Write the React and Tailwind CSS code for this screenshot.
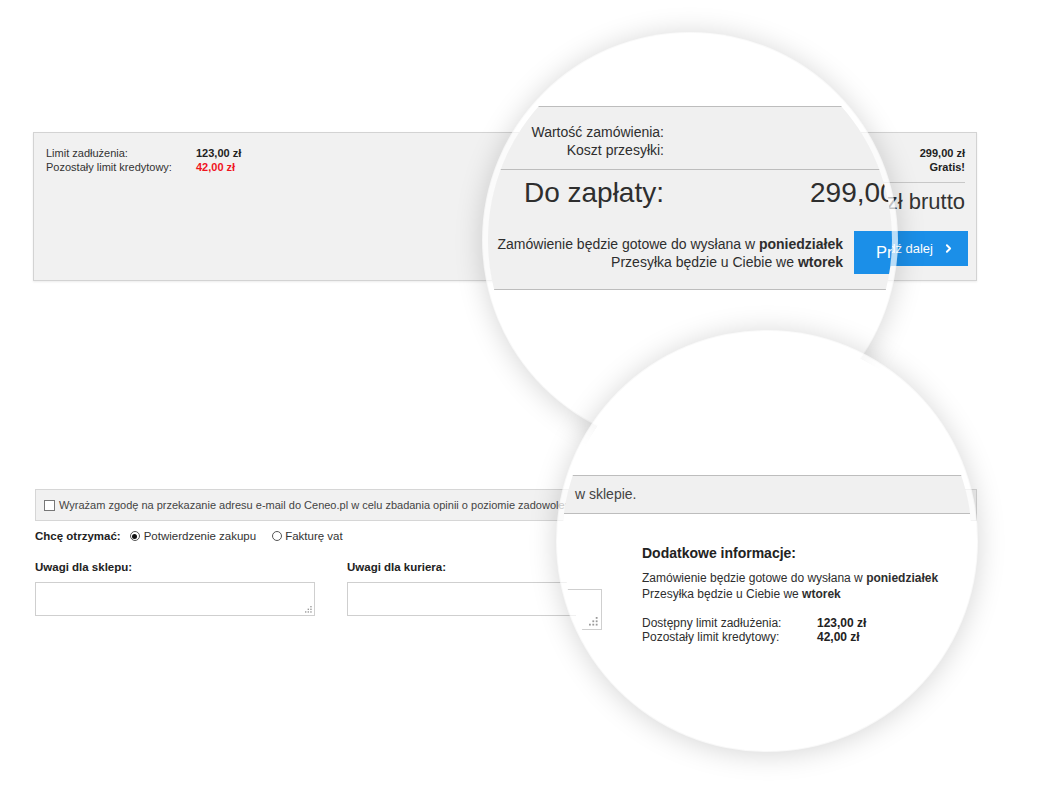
import { ChevronRight } from "lucide-react";

function Grip({ size = 8, color = "#9a9a9a" }) {
  const dots = [
    [6, 0],
    [3, 3],
    [6, 3],
    [0, 6],
    [3, 6],
    [6, 6],
  ];
  return (
    <svg width={size} height={size} viewBox="0 0 8 8" className="block">
      {dots.map(([x, y]) => (
        <rect key={`${x}-${y}`} x={x} y={y} width={1.6} height={1.6} fill={color} />
      ))}
    </svg>
  );
}

function Radio({ checked }) {
  return (
    <span className="flex h-[10px] w-[10px] items-center justify-center rounded-full border border-[#555] bg-white">
      {checked && <span className="h-[5px] w-[5px] rounded-full bg-[#111]" />}
    </span>
  );
}

function NoteBox({ label }) {
  return (
    <div className="w-[280px]">
      <div className="text-[11.5px] font-bold leading-[14px] text-[#222]">{label}</div>
      <div className="relative mt-[8px] h-[34px] border border-[#cfcfcf] bg-white">
        <div className="absolute bottom-[2px] right-[2px]">
          <Grip size={7} />
        </div>
      </div>
    </div>
  );
}

export default function App() {
  return (
    <div className="relative h-[787px] w-[1040px] overflow-hidden bg-white font-['Liberation_Sans',Arial,sans-serif] text-[#333]">
      <div className="pl-[33px] pt-[132px]">
        {/* koszyk - podsumowanie */}
        <div className="flex h-[149px] w-[944px] justify-between border border-[#d3d3d3] bg-[#f1f1f1] shadow-[0_1px_2px_rgba(0,0,0,0.08)]">
          <div className="pl-[12px] pt-[13px] text-[11px] leading-[14px]">
            <div className="flex">
              <span className="w-[150px]">Limit zadłużenia:</span>
              <span className="font-bold text-[#222]">123,00 zł</span>
            </div>
            <div className="flex">
              <span className="w-[150px]">Pozostały limit kredytowy:</span>
              <span className="font-bold text-[#f0141e]">42,00 zł</span>
            </div>
          </div>

          <div className="w-[300px] pr-[11px] pt-[13px]">
            <div className="flex justify-between text-[11px] leading-[14px]">
              <span>Wartość zamówienia:</span>
              <span className="font-bold text-[#222]">299,00 zł</span>
            </div>
            <div className="flex justify-between text-[11px] leading-[14px]">
              <span>Koszt przesyłki:</span>
              <span className="font-bold text-[#222]">Gratis!</span>
            </div>
            <div className="ml-[40px] mt-[8px] border-t border-[#c8c8c8]" />
            <div className="mt-[6px] flex justify-between text-[22px] leading-[26px]">
              <span>Do zapłaty:</span>
              <span>299,00 zł brutto</span>
            </div>
            <div className="-mr-[3px] mt-[16px] flex items-center justify-end gap-[8px]">
              <div className="whitespace-nowrap text-right text-[11px] leading-[14px]">
                <div>
                  Zamówienie będzie gotowe do wysłana w <b>poniedziałek</b>
                </div>
                <div>
                  Przesyłka będzie u Ciebie we <b>wtorek</b>
                </div>
              </div>
              <button className="flex h-[35px] shrink-0 items-center gap-[9px] whitespace-nowrap bg-[#1b8fe8] px-[13px] text-[13px] text-white">
                Przejdź dalej
                <ChevronRight size={13} strokeWidth={3.5} />
              </button>
            </div>
          </div>
        </div>

        {/* zgoda */}
        <div className="ml-[2px] mt-[208px] flex h-[32px] w-[942px] items-center gap-[4px] border border-[#d6d6d6] bg-[#f1f1f1] pl-[8px] text-[11px] text-[#444]">
          <span className="h-[11px] w-[11px] border border-[#777] bg-white" />
          <span className="whitespace-nowrap">
            Wyrażam zgodę na przekazanie adresu e-mail do Ceneo.pl w celu zbadania opinii o poziomie zadowolenia z zakupu w sklepie.
          </span>
        </div>

        <div className="ml-[2px] mt-[8px] flex h-[14px] items-center text-[11.5px] leading-[14px]">
          <span className="font-bold text-[#222]">Chcę otrzymać:</span>
          <span className="ml-[9px] flex items-center gap-[4px]">
            <Radio checked />
            <span>Potwierdzenie zakupu</span>
          </span>
          <span className="ml-[16px] flex items-center gap-[3px]">
            <Radio />
            <span>Fakturę vat</span>
          </span>
        </div>

        <div className="ml-[2px] mt-[17px] flex gap-[32px]">
          <NoteBox label="Uwagi dla sklepu:" />
          <NoteBox label="Uwagi dla kuriera:" />
        </div>
      </div>

      {/* lupa 1 */}
      <div className="absolute left-[482px] top-[32px] h-[416px] w-[416px] overflow-hidden rounded-full border-[6px] border-white/70 bg-white bg-clip-padding shadow-[0_2px_28px_rgba(0,0,0,0.17)]">
        <div className="mt-[68px] w-[700px] border-y border-[#bdbdbd] bg-[#f0f0f0] pb-[15px] pt-[16px] text-[#2e2e2e]">
          <div className="w-[176px] text-right text-[14px] leading-[18px]">
            <div>Wartość zamówienia:</div>
            <div>Koszt przesyłki:</div>
          </div>
          <div className="mt-[10px] border-t border-[#bdbdbd]" />
          <div className="mt-[6px] flex whitespace-nowrap text-[28px] leading-[34px]">
            <span className="w-[176px] text-right">Do zapłaty:</span>
            <span className="ml-[146px]">299,00 zł brutto</span>
          </div>
          <div className="mt-[21px] flex items-center">
            <div className="w-[355px] whitespace-nowrap text-right text-[14px] leading-[18px]">
              <div>
                Zamówienie będzie gotowe do wysłana w <b>poniedziałek</b>
              </div>
              <div>
                Przesyłka będzie u Ciebie we <b>wtorek</b>
              </div>
            </div>
            <button className="ml-[11px] flex h-[43px] w-[146px] shrink-0 items-center whitespace-nowrap bg-[#1b8fe8] pl-[22px] text-[16.5px] text-white">
              Przejdź dalej
            </button>
          </div>
        </div>
      </div>

      {/* lupa 2 */}
      <div className="absolute left-[556px] top-[330px] h-[422px] w-[422px] overflow-hidden rounded-full border-[6px] border-white/70 bg-white bg-clip-padding shadow-[0_2px_28px_rgba(0,0,0,0.17)]">
        <div className="mt-[139px] flex h-[39px] items-center border-y border-[#bdbdbd] bg-[#f0f0f0] pl-[13px] text-[14px] text-[#444]">
          w sklepie.
        </div>
        <div className="flex">
          <div className="w-[40px] pt-[75px]">
            <div className="relative h-[41px] border border-[#cfcfcf] bg-white">
              <div className="absolute bottom-[3px] right-[3px]">
                <Grip size={9} />
              </div>
            </div>
          </div>
          <div className="ml-[40px] pt-[30px] text-[#2e2e2e]">
            <div className="text-[14px] font-bold leading-[18px] text-[#222]">Dodatkowe informacje:</div>
            <div className="mt-[8px] whitespace-nowrap text-[12px] leading-[16px]">
              <div>
                Zamówienie będzie gotowe do wysłana w <b>poniedziałek</b>
              </div>
              <div>
                Przesyłka będzie u Ciebie we <b>wtorek</b>
              </div>
            </div>
            <div className="mt-[14px] text-[12px] leading-[14px]">
              <div className="flex">
                <span className="w-[175px]">Dostępny limit zadłużenia:</span>
                <span className="font-bold text-[#222]">123,00 zł</span>
              </div>
              <div className="flex">
                <span className="w-[175px]">Pozostały limit kredytowy:</span>
                <span className="font-bold text-[#222]">42,00 zł</span>
              </div>
            </div>
          </div>
        </div>
      </div>
    </div>
  );
}
